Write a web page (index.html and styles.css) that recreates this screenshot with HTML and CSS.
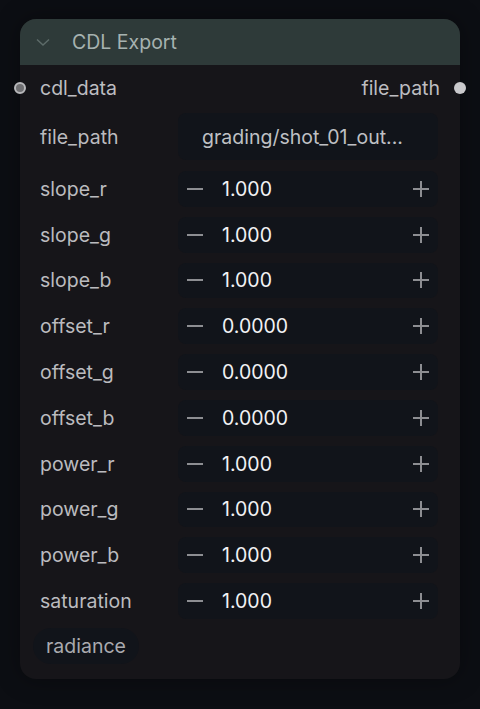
FILE: index.html
```html
<!DOCTYPE html>
<html>
<head>
<meta charset="utf-8">
<link rel="stylesheet" href="styles.css">
</head>
<body>
<div class="node">
  <div class="header">
    <svg class="chev" width="16" height="16" viewBox="0 0 16 16"><path d="M2 5.5 L8 11 L14 5.5" fill="none" stroke="#5d6b69" stroke-width="1.5"/></svg>
    <span class="title">CDL Export</span>
  </div>
  <div class="content">
    <div class="io">
      <span class="port port-in"></span>
      <span class="io-label">cdl_data</span>
      <span class="io-label io-right">file_path</span>
      <span class="port port-out"></span>
    </div>
    <div class="widgets">
      <div class="row">
        <span class="label">file_path</span>
        <div class="box text-box">grading/shot_01_out...</div>
      </div>
      <div class="row"><span class="label">slope_r</span><div class="box num"><span class="minus"></span><span class="val">1.000</span><span class="plus"></span></div></div>
      <div class="row"><span class="label">slope_g</span><div class="box num"><span class="minus"></span><span class="val">1.000</span><span class="plus"></span></div></div>
      <div class="row"><span class="label">slope_b</span><div class="box num"><span class="minus"></span><span class="val">1.000</span><span class="plus"></span></div></div>
      <div class="row"><span class="label">offset_r</span><div class="box num"><span class="minus"></span><span class="val">0.0000</span><span class="plus"></span></div></div>
      <div class="row"><span class="label">offset_g</span><div class="box num"><span class="minus"></span><span class="val">0.0000</span><span class="plus"></span></div></div>
      <div class="row"><span class="label">offset_b</span><div class="box num"><span class="minus"></span><span class="val">0.0000</span><span class="plus"></span></div></div>
      <div class="row"><span class="label">power_r</span><div class="box num"><span class="minus"></span><span class="val">1.000</span><span class="plus"></span></div></div>
      <div class="row"><span class="label">power_g</span><div class="box num"><span class="minus"></span><span class="val">1.000</span><span class="plus"></span></div></div>
      <div class="row"><span class="label">power_b</span><div class="box num"><span class="minus"></span><span class="val">1.000</span><span class="plus"></span></div></div>
      <div class="row"><span class="label">saturation</span><div class="box num"><span class="minus"></span><span class="val">1.000</span><span class="plus"></span></div></div>
    </div>
    <div class="footer"><span class="tag">radiance</span></div>
  </div>
</div>
</body>
</html>
```

FILE: styles.css
```css
html, body {
  margin: 0;
  padding: 0;
  background: #0c0e13;
  font-family: Inter, "Noto Sans", sans-serif;
}
body {
  width: 480px;
  height: 709px;
  overflow: hidden;
}
.node {
  margin: 19px 20px 0 20px;
  width: 440px;
  height: 660px;
  background: #161519;
  border-radius: 16px;
  box-shadow: 0 0 24px rgba(0,0,0,0.35);
  display: flex;
  flex-direction: column;
}
.header {
  height: 46px;
  background: #2e3a39;
  border-radius: 16px 16px 0 0;
  display: flex;
  align-items: center;
  padding-left: 15px;
  gap: 21px;
}
.chev { display: block; }
.title {
  color: #a6b2b0;
  font-size: 19.5px;
}
.content {
  display: flex;
  flex-direction: column;
}
.io {
  height: 46px;
  display: flex;
  align-items: center;
  position: relative;
  padding: 0 20px;
}
.io-label {
  color: #bdbdc1;
  font-size: 19.5px;
}
.io-right { margin-left: auto; }
.port {
  position: absolute;
  top: 50%;
  border-radius: 50%;
}
.port-in {
  left: -6px;
  width: 8px;
  height: 8px;
  margin-top: -6px;
  background: #6f6f72;
  border: 2px solid #b8b8bb;
}
.port-out {
  right: -6px;
  width: 12px;
  height: 12px;
  margin-top: -6px;
  background: #c9c9cc;
}
.widgets {
  display: flex;
  flex-direction: column;
  gap: 10px;
  padding: 2px 22px 0 20px;
}
.row {
  display: flex;
  align-items: center;
}
.label {
  width: 138px;
  color: #bbbbbf;
  font-size: 19.5px;
  flex-shrink: 0;
}
.box {
  flex: 1;
  background: #11141a;
  border-radius: 8px;
  display: flex;
  align-items: center;
}
.text-box {
  height: 47px;
  padding-left: 24px;
  color: #bfc0c4;
  font-size: 19.5px;
}
.row + .row { margin-top: 1px; }
.row + .row + .row { margin-top: 0; }
.num {
  height: 35.8px;
  padding: 0 9px 0 9px;
}
.minus {
  width: 16px;
  height: 2px;
  background: #8d8e92;
  margin-right: 19px;
}
.val {
  color: #f2f2f4;
  font-size: 19.5px;
}
.plus {
  margin-left: auto;
  width: 16px;
  height: 16px;
  position: relative;
}
.plus::before, .plus::after {
  content: "";
  position: absolute;
  background: #8d8e92;
}
.plus::before { left: 0; top: 7px; width: 16px; height: 2px; }
.plus::after { left: 7px; top: 0; width: 2px; height: 16px; }
.footer {
  padding: 9px 0 0 13px;
}
.tag {
  display: inline-block;
  background: #11141a;
  border-radius: 18px;
  padding: 0 13px;
  height: 36px;
  line-height: 36px;
  color: #a9aaaf;
  font-size: 19.5px;
}
```
